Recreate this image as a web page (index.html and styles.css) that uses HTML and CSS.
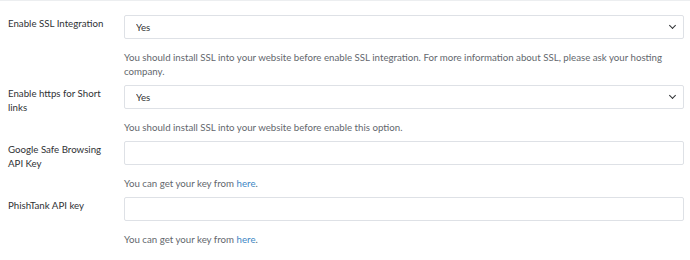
FILE: index.html
```html
<!doctype html>
<html lang="en">
<head>
  <meta charset="utf-8">
  <title>Security settings</title>
  <link rel="stylesheet" href="styles.css">
</head>
<body>
  <div class="settings">

    <div class="row">
      <label class="label" for="ssl">Enable SSL Integration</label>
      <div class="field">
        <div class="select-wrap">
          <select id="ssl" class="control"><option>Yes</option><option>No</option></select>
        </div>
        <p class="help">You should install SSL into your website before enable SSL integration. For more information about SSL, please ask your hosting company.</p>
      </div>
    </div>

    <div class="row">
      <label class="label" for="https">Enable https for Short links</label>
      <div class="field">
        <div class="select-wrap">
          <select id="https" class="control"><option>Yes</option><option>No</option></select>
        </div>
        <p class="help">You should install SSL into your website before enable this option.</p>
      </div>
    </div>

    <div class="row">
      <label class="label" for="gsb">Google Safe Browsing API Key</label>
      <div class="field">
        <input id="gsb" class="control" type="text">
        <p class="help">You can get your key from <a href="#">here</a>.</p>
      </div>
    </div>

    <div class="row">
      <label class="label" for="phish">PhishTank API key</label>
      <div class="field">
        <input id="phish" class="control" type="text">
        <p class="help">You can get your key from <a href="#">here</a>.</p>
      </div>
    </div>

  </div>
</body>
</html>
```

FILE: styles.css
```css
body{
  margin:0; background:#fff; color:#333;
  font-family:Lato,"Open Sans",sans-serif; font-size:9.7px;
}
.settings{
  border-top:1px solid #eceef0;
  padding:14px 6px 0 8px;
}
.row{
  display:grid; grid-template-columns:116px 1fr;
}
.label{
  line-height:14px; padding-top:1px; padding-right:10px;
  color:#2f3235;
}
.field{ min-width:0; }
.control{
  display:block; width:100%; height:24px; box-sizing:border-box;
  border:1px solid #dee1e6; border-radius:2px; background:#fff;
  font:inherit; color:#333; padding:0 11px; margin:0;
  outline:none;
}
.select-wrap{ position:relative; }
select.control{ appearance:none; -webkit-appearance:none; }
.select-wrap::after{
  content:""; position:absolute; right:9px; top:8px;
  width:4px; height:4px;
  border-right:1.7px solid #2f3235; border-bottom:1.7px solid #2f3235;
  transform:rotate(45deg);
  pointer-events:none;
}
.help{
  margin:11px 0 7px; line-height:14px; color:#63676d;
}
.help a{ color:#3c86c4; text-decoration:none; }
```
